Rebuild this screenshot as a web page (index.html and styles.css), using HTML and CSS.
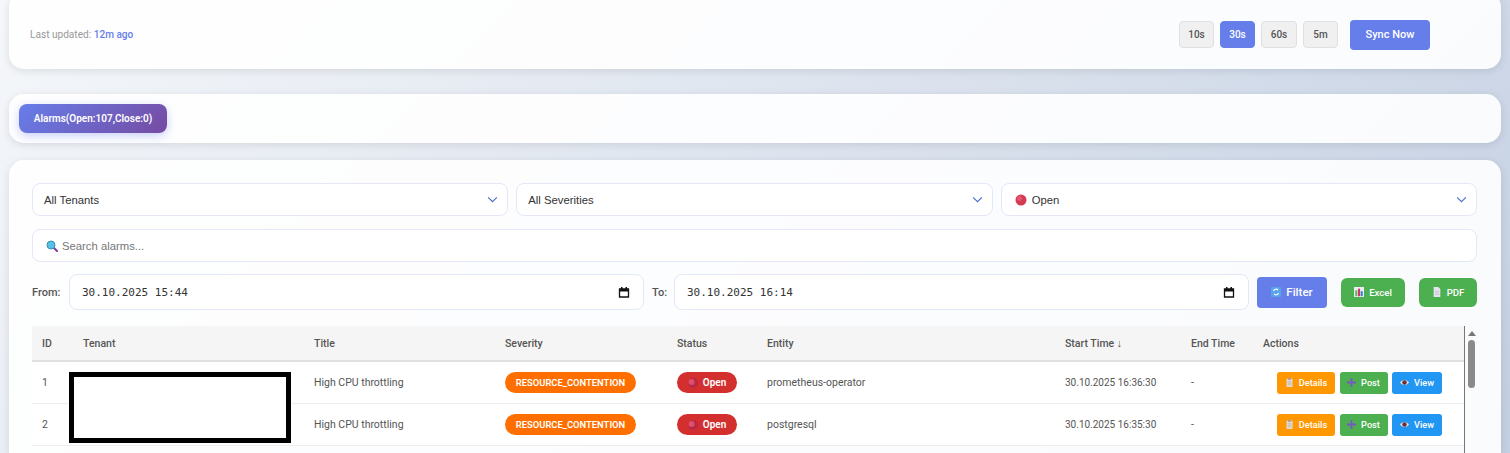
FILE: index.html
```html
<!DOCTYPE html>
<html lang="en">
<head>
<meta charset="UTF-8">
<meta name="viewport" content="width=device-width, initial-scale=1.0">
<title>Alarms</title>
<link rel="stylesheet" href="styles.css">
</head>
<body>

<div class="card top-bar">
    <div class="last-updated">Last updated: <span class="last-updated-value">12m ago</span></div>
    <div class="refresh-group">
        <button class="interval-btn" type="button">10s</button>
        <button class="interval-btn interval-active" type="button">30s</button>
        <button class="interval-btn interval-wide" type="button">60s</button>
        <button class="interval-btn" type="button">5m</button>
        <button class="sync-btn" type="button">Sync Now</button>
    </div>
</div>

<div class="card tab-bar">
    <button class="tab-btn" type="button">Alarms(Open:107,Close:0)</button>
</div>

<div class="card alarms-panel">
    <div class="filter-row">
        <div class="select-box">
            <span>All Tenants</span>
            <svg class="chevron" viewBox="0 0 12 8"><path d="M1 1.500l5 5 5-5" fill="none" stroke="#4a6fd0" stroke-width="1.300"/></svg>
        </div>
        <div class="select-box">
            <span>All Severities</span>
            <svg class="chevron" viewBox="0 0 12 8"><path d="M1 1.500l5 5 5-5" fill="none" stroke="#4a6fd0" stroke-width="1.300"/></svg>
        </div>
        <div class="select-box">
            <span class="select-open">
                <svg class="dot-icon-lg" viewBox="0 0 12 12"><circle cx="6" cy="6" r="5.500" fill="#d43a52"/><circle cx="4.500" cy="4.500" r="2.500" fill="#e4566f"/></svg>
                Open
            </span>
            <svg class="chevron" viewBox="0 0 12 8"><path d="M1 1.500l5 5 5-5" fill="none" stroke="#4a6fd0" stroke-width="1.300"/></svg>
        </div>
    </div>

    <div class="search-box">
        <svg class="search-icon" viewBox="0 0 12 12">
            <path d="M7.500 7.500L11 11" stroke="#7b3f98" stroke-width="2" stroke-linecap="round"/>
            <circle cx="5" cy="5" r="4" fill="#55c1e8" stroke="#3d8fb5" stroke-width="1"/>
        </svg>
        <input class="search-input" type="text" placeholder="Search alarms...">
    </div>

    <div class="date-row">
        <span class="date-label date-label-from">From:</span>
        <div class="date-input">
            <span>30.10.2025 15:44</span>
            <svg class="calendar" viewBox="0 0 12 12"><path d="M1.500 3h9v8h-9z" fill="none" stroke="#111" stroke-width="1.300"/><path d="M1.500 3h9v2.500h-9zM3 1h1.500v2H3zM7.500 1H9v2H7.500z" fill="#111"/></svg>
        </div>
        <span class="date-label date-label-to">To:</span>
        <div class="date-input">
            <span>30.10.2025 16:14</span>
            <svg class="calendar" viewBox="0 0 12 12"><path d="M1.500 3h9v8h-9z" fill="none" stroke="#111" stroke-width="1.300"/><path d="M1.500 3h9v2.500h-9zM3 1h1.500v2H3zM7.500 1H9v2H7.500z" fill="#111"/></svg>
        </div>
        <button class="filter-btn" type="button">
            <svg class="icon-md" viewBox="0 0 12 12"><rect width="12" height="12" rx="1" fill="#5aa2ea"/><path d="M3 5a3 3 0 0 1 5.500-1M9 7a3 3 0 0 1-5.500 1" fill="none" stroke="#fff" stroke-width="1.300"/></svg>
            Filter
        </button>
        <button class="export-btn export-excel" type="button">
            <svg class="icon-md" viewBox="0 0 12 12"><rect width="12" height="12" fill="#e8eef2"/><rect x="1.500" y="4" width="2.500" height="7" fill="#5cb85c"/><rect x="4.800" y="2" width="2.500" height="9" fill="#d9306b"/><rect x="8" y="5" width="2.500" height="6" fill="#3f7fd0"/></svg>
            Excel
        </button>
        <button class="export-btn export-pdf" type="button">
            <svg class="icon-md" viewBox="0 0 12 12"><path d="M2 0h5.500L10 2.500V12H2z" fill="#e6e4ee"/><path d="M3.500 5h5M3.500 7h5M3.500 9h5" stroke="#b9b5cc" stroke-width=".8"/></svg>
            PDF
        </button>
    </div>

    <div class="table-wrap">
        <div class="table-scroll">
            <table class="alarm-table">
                <thead>
                    <tr>
                        <th class="col-id">ID</th>
                        <th class="col-tenant">Tenant</th>
                        <th class="col-title">Title</th>
                        <th class="col-severity">Severity</th>
                        <th class="col-status">Status</th>
                        <th class="col-entity">Entity</th>
                        <th class="col-start">Start Time ↓</th>
                        <th class="col-end">End Time</th>
                        <th class="col-actions">Actions</th>
                    </tr>
                </thead>
                <tbody>
                    <tr>
                        <td>1</td>
                        <td></td>
                        <td>High CPU throttling</td>
                        <td><span class="severity-pill">RESOURCE_CONTENTION</span></td>
                        <td>
                            <span class="status-pill">
                                <svg class="dot-icon" viewBox="0 0 10 10"><circle cx="5" cy="5" r="5" fill="#b92845"/><circle cx="3.500" cy="4" r="3" fill="#df4f68"/></svg>
                                Open
                            </span>
                        </td>
                        <td>prometheus-operator</td>
                        <td class="cell-time">30.10.2025 16:36:30</td>
                        <td>-</td>
                        <td>
                            <div class="action-group">
                                <button class="action-btn action-details" type="button">
                                    <svg class="icon-sm" viewBox="0 0 10 12"><rect x="1" y="1" width="8" height="11" rx="1" fill="#e3dcd2"/><rect x="3" y="0" width="4" height="2.500" fill="#a99f95"/><path d="M2.500 5h5M2.500 7h5M2.500 9h5" stroke="#a99f95" stroke-width=".7"/></svg>
                                    Details
                                </button>
                                <button class="action-btn action-post" type="button">
                                    <svg class="icon-sm" viewBox="0 0 10 10"><path d="M5 0v10M0 5h10" stroke="#7a57c0" stroke-width="2"/></svg>
                                    Post
                                </button>
                                <button class="action-btn action-view" type="button">
                                    <svg class="icon-sm" viewBox="0 0 12 10"><path d="M0 5c3-4.500 9-4.500 12 0-3 4.500-9 4.500-12 0z" fill="#e5dfe0"/><circle cx="6" cy="5" r="3" fill="#6a3038"/></svg>
                                    View
                                </button>
                            </div>
                        </td>
                    </tr>
                    <tr>
                        <td>2</td>
                        <td></td>
                        <td>High CPU throttling</td>
                        <td><span class="severity-pill">RESOURCE_CONTENTION</span></td>
                        <td>
                            <span class="status-pill">
                                <svg class="dot-icon" viewBox="0 0 10 10"><circle cx="5" cy="5" r="5" fill="#b92845"/><circle cx="3.500" cy="4" r="3" fill="#df4f68"/></svg>
                                Open
                            </span>
                        </td>
                        <td>postgresql</td>
                        <td class="cell-time">30.10.2025 16:35:30</td>
                        <td>-</td>
                        <td>
                            <div class="action-group">
                                <button class="action-btn action-details" type="button">
                                    <svg class="icon-sm" viewBox="0 0 10 12"><rect x="1" y="1" width="8" height="11" rx="1" fill="#e3dcd2"/><rect x="3" y="0" width="4" height="2.500" fill="#a99f95"/><path d="M2.500 5h5M2.500 7h5M2.500 9h5" stroke="#a99f95" stroke-width=".7"/></svg>
                                    Details
                                </button>
                                <button class="action-btn action-post" type="button">
                                    <svg class="icon-sm" viewBox="0 0 10 10"><path d="M5 0v10M0 5h10" stroke="#7a57c0" stroke-width="2"/></svg>
                                    Post
                                </button>
                                <button class="action-btn action-view" type="button">
                                    <svg class="icon-sm" viewBox="0 0 12 10"><path d="M0 5c3-4.500 9-4.500 12 0-3 4.500-9 4.500-12 0z" fill="#e5dfe0"/><circle cx="6" cy="5" r="3" fill="#6a3038"/></svg>
                                    View
                                </button>
                            </div>
                        </td>
                    </tr>
                </tbody>
            </table>
        </div>
        <div class="scrollbar">
            <div class="scrollbar-arrow"></div>
            <div class="scrollbar-thumb"></div>
        </div>
        <div class="redaction"></div>
    </div>
</div>

</body>
</html>
```

FILE: styles.css
```css
html,
body {
    height: 100%;
}

body {
    font-family: Roboto, "Noto Sans", sans-serif;
    background: linear-gradient(135deg, #f5f7fa 0%, #c3cfe2 100%);
    margin: 0;
    padding: 0 9px;
    overflow: hidden;
    box-sizing: border-box;
    display: flex;
    flex-direction: column;
}

button {
    font-family: inherit;
    cursor: pointer;
}

.card {
    background-color: rgba(255, 255, 255, 0.9);
    border-radius: 15px;
    box-shadow: 0 2px 8px rgba(0, 0, 0, 0.1);
}

.top-bar {
    display: flex;
    justify-content: space-between;
    align-items: center;
    box-sizing: border-box;
    flex: 0 0 77px;
    margin-top: -8px;
    padding: 8px 71px 0 21px;
}

.last-updated {
    font-size: 10.100px;
    color: #999;
}

.last-updated-value {
    color: #667eea;
    font-weight: 500;
}

.refresh-group {
    display: flex;
    align-items: center;
    gap: 6px;
}

.interval-btn {
    height: 27px;
    width: 35px;
    padding: 0;
    font-size: 10px;
    font-weight: 500;
    color: #555;
    background-color: #f0f0f0;
    border: 1px solid #e0e0e0;
    border-radius: 4px;
}

.interval-wide {
    width: 36px;
}

.interval-active {
    color: #fff;
    background-color: #667eea;
    border-color: #667eea;
}

.sync-btn {
    height: 30px;
    width: 80px;
    margin-left: 6px;
    padding: 0;
    font-size: 11px;
    font-weight: 500;
    color: #fff;
    background-color: #667eea;
    border: none;
    border-radius: 4px;
}

.tab-bar {
    box-sizing: border-box;
    flex: 0 0 49px;
    margin-top: 25px;
    padding: 10px;
}

.tab-btn {
    height: 29px;
    width: 148px;
    padding: 0;
    font-size: 10px;
    font-weight: 600;
    color: #fff;
    background: linear-gradient(135deg, #667eea 0%, #764ba2 100%);
    border: none;
    border-radius: 8px;
    box-shadow: 0 3px 10px rgba(102, 126, 234, 0.35);
}

.alarms-panel {
    flex: 1;
    min-height: 0;
    display: flex;
    flex-direction: column;
    margin-top: 17px;
    padding: 23px 24px 0 23px;
    border-radius: 15px 15px 0 0;
    overflow: hidden;
}

.filter-row {
    display: flex;
    gap: 8px;
}

.select-box {
    flex: 1;
    height: 33px;
    box-sizing: border-box;
    display: flex;
    justify-content: space-between;
    align-items: center;
    padding: 0 9px 0 11px;
    font-family: "Liberation Sans", Arial, sans-serif;
    font-size: 11.300px;
    color: #333;
    background-color: #fff;
    border: 1px solid #e3e7f8;
    border-radius: 8px;
}

.select-open {
    display: flex;
    align-items: center;
    gap: 5px;
}

.chevron {
    width: 11px;
    height: 7px;
}

.dot-icon-lg {
    width: 12px;
    height: 12px;
    margin-left: 2px;
}

.search-box {
    display: flex;
    align-items: center;
    gap: 4px;
    height: 33px;
    flex-shrink: 0;
    box-sizing: border-box;
    margin-top: 13px;
    padding: 0 13px;
    background-color: #fff;
    border: 1px solid #e3e7f8;
    border-radius: 8px;
}

.search-icon {
    width: 12px;
    height: 12px;
}

.search-input {
    flex: 1;
    border: none;
    outline: none;
    padding: 0;
    font-family: "Liberation Sans", Arial, sans-serif;
    font-size: 11.300px;
    background: transparent;
}

.search-input::placeholder {
    color: #777;
}

.date-row {
    display: flex;
    align-items: center;
    flex-shrink: 0;
    gap: 8px;
    margin-top: 12px;
}

.date-label {
    font-size: 11px;
    font-weight: 500;
    color: #555;
}

.date-label-from {
    width: 29px;
}

.date-label-to {
    width: 14px;
}

.date-input {
    flex: 1;
    height: 36px;
    box-sizing: border-box;
    display: flex;
    justify-content: space-between;
    align-items: center;
    padding: 0 13px 0 12px;
    font-family: "DejaVu Sans Mono", monospace;
    font-size: 11px;
    color: #333;
    background-color: #fff;
    border: 1px solid #e3e7f8;
    border-radius: 8px;
}

.calendar {
    width: 12px;
    height: 12px;
}

.filter-btn,
.export-btn {
    display: flex;
    justify-content: center;
    align-items: center;
    padding: 0;
    color: #fff;
    font-weight: 500;
    border: none;
}

.filter-btn {
    gap: 5px;
    width: 70px;
    height: 31px;
    font-size: 11.500px;
    background-color: #667eea;
    border-radius: 4px;
}

.export-btn {
    gap: 5px;
    height: 29px;
    font-size: 9.600px;
    background-color: #4caf50;
    border-radius: 6px;
    margin-left: 6px;
}

.export-excel {
    width: 64px;
}

.export-pdf {
    width: 58px;
}

.icon-md {
    width: 10px;
    height: 10px;
}

.table-wrap {
    position: relative;
    flex: 1;
    display: flex;
    margin-top: 16px;
}

.table-scroll {
    width: 1433px;
    box-sizing: border-box;
    border-right: 1px solid #777;
}

.alarm-table {
    width: 1432px;
    border-collapse: collapse;
    table-layout: fixed;
}

.alarm-table th {
    height: 35px;
    padding: 0 10px;
    box-sizing: border-box;
    text-align: left;
    font-size: 10.500px;
    font-weight: 500;
    color: #555;
    background-color: #f5f5f5;
    border-bottom: 2px solid #e0e0e0;
}

.alarm-table td {
    height: 42px;
    padding: 1px 10px 0;
    box-sizing: border-box;
    font-size: 10.500px;
    color: #555;
    background-color: #fff;
    border-bottom: 1px solid #eee;
}

.alarm-table .cell-time {
    font-size: 10px;
}

.col-id { width: 41px; }
.col-tenant { width: 231px; }
.col-title { width: 191px; }
.col-severity { width: 172px; }
.col-status { width: 90px; }
.col-entity { width: 298px; }
.col-start { width: 126px; }
.col-end { width: 72px; }
.col-actions { width: 211px; }

.severity-pill,
.status-pill {
    display: inline-flex;
    align-items: center;
    height: 21px;
    box-sizing: border-box;
    color: #fff;
    font-weight: 600;
    border-radius: 11px;
    vertical-align: middle;
}

.severity-pill {
    width: 131px;
    justify-content: center;
    font-size: 9.400px;
    background-color: #ff6f00;
}

.status-pill {
    width: 60px;
    justify-content: center;
    gap: 5px;
    font-size: 10px;
    background-color: #d32f2f;
}

.dot-icon {
    width: 10px;
    height: 10px;
}

.action-group {
    display: flex;
    justify-content: flex-end;
    gap: 4.500px;
    padding-right: 12px;
}

.action-btn {
    display: flex;
    justify-content: center;
    align-items: center;
    gap: 5px;
    height: 22px;
    padding: 0;
    color: #fff;
    font-size: 9.200px;
    font-weight: 500;
    border: none;
    border-radius: 3px;
}

.action-details {
    width: 58px;
    background-color: #ff9800;
}

.action-post {
    width: 48px;
    background-color: #4caf50;
}

.action-view {
    width: 50px;
    background-color: #2196f3;
}

.icon-sm {
    width: 9px;
    height: 9px;
}

.scrollbar {
    flex: 1;
    padding: 5px 2px 0 3px;
    box-sizing: border-box;
}

.scrollbar-arrow {
    width: 0;
    height: 0;
    margin: 0 auto;
    border-left: 4px solid transparent;
    border-right: 4px solid transparent;
    border-bottom: 5px solid #777;
}

.scrollbar-thumb {
    width: 7px;
    height: 48px;
    margin-top: 4px;
    background-color: #8a8a8a;
    border-radius: 4px;
}

.redaction {
    position: absolute;
    left: 37px;
    top: 46px;
    width: 222px;
    height: 71px;
    box-sizing: border-box;
    background-color: #fff;
    border: 5px solid #000;
}
```
